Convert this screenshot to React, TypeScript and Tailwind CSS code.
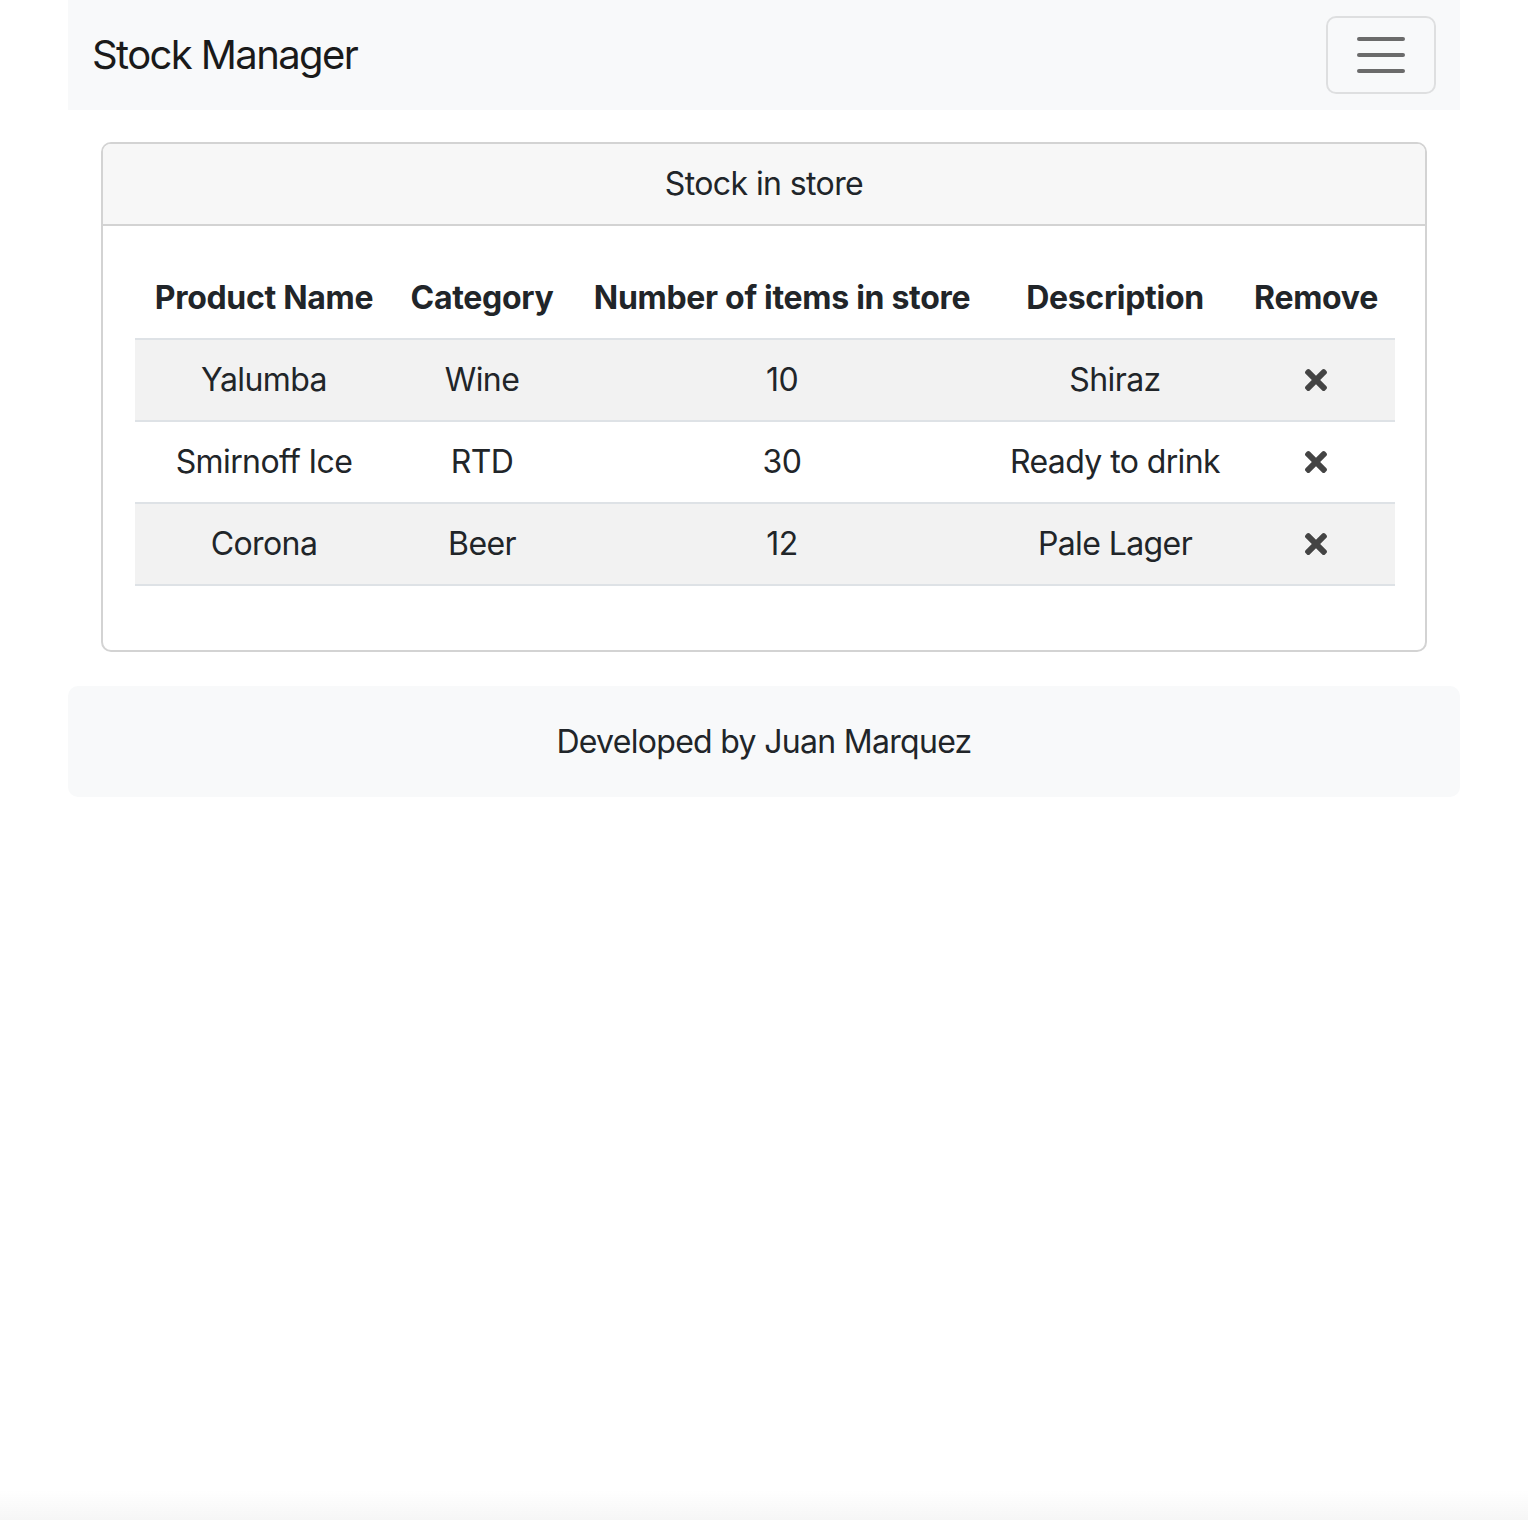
import { FaTimes } from 'react-icons/fa';

const products = [
  { name: 'Yalumba', category: 'Wine', count: 10, description: 'Shiraz' },
  { name: 'Smirnoff Ice', category: 'RTD', count: 30, description: 'Ready to drink' },
  { name: 'Corona', category: 'Beer', count: 12, description: 'Pale Lager' },
];

export default function App() {
  return (
    <div
      className="relative min-h-screen bg-white text-[#212529]"
      style={{ fontFamily: 'Inter, "Noto Sans", sans-serif' }}
    >
      <div className="mx-[68px]">
        <nav className="h-[110px] bg-[#f8f9fa] flex items-center justify-between pl-6 pr-6">
          <span className="text-[40px] leading-none text-[#1a1a1a] tracking-[-1.6px]">Stock Manager</span>
          <button
            type="button"
            className="w-[110px] h-[78px] border-2 border-black/10 rounded-[10px] flex flex-col items-center justify-center gap-[12px]"
          >
            <span className="block w-[48px] h-[4px] rounded-full bg-[#6b6b6b]" />
            <span className="block w-[48px] h-[4px] rounded-full bg-[#6b6b6b]" />
            <span className="block w-[48px] h-[4px] rounded-full bg-[#6b6b6b]" />
          </button>
        </nav>

        <main className="px-[33px] pt-[32px]">
          <div className="border-2 border-[#d3d3d3] rounded-[10px] overflow-hidden">
            <div className="h-[82px] bg-[#f7f7f7] border-b-2 border-[#d3d3d3] flex items-center justify-center text-[32px] tracking-[-0.6px]">
              Stock in store
            </div>
            <div className="p-[32px]">
              <table className="w-full table-fixed border-collapse text-center text-[32px] mb-[32px]">
                <colgroup>
                  <col className="w-[258px]" />
                  <col className="w-[178px]" />
                  <col className="w-[422px]" />
                  <col className="w-[244px]" />
                  <col className="w-[158px]" />
                </colgroup>
                <thead>
                  <tr className="border-b-2 border-[#dee2e6]">
                    <th className="py-4 font-bold leading-[48px] tracking-[-0.3px]">Product Name</th>
                    <th className="py-4 font-bold leading-[48px] tracking-[-0.3px]">Category</th>
                    <th className="py-4 font-bold leading-[48px] tracking-[-0.3px]">Number of items in store</th>
                    <th className="py-4 font-bold leading-[48px] tracking-[-0.3px]">Description</th>
                    <th className="py-4 font-bold leading-[48px] tracking-[-0.3px]">Remove</th>
                  </tr>
                </thead>
                <tbody className="tracking-[-0.6px]">
                  {products.map((p, i) => (
                    <tr
                      key={p.name}
                      className={`border-b-2 border-[#dee2e6] ${i % 2 === 0 ? 'bg-[#f2f2f2]' : 'bg-white'}`}
                    >
                      <td className="py-4 leading-[48px]">{p.name}</td>
                      <td className="py-4 leading-[48px]">{p.category}</td>
                      <td className="py-4 leading-[48px]">{p.count}</td>
                      <td className="py-4 leading-[48px]">{p.description}</td>
                      <td className="py-4 leading-[48px]">
                        <FaTimes size={32} className="inline-block align-middle text-[#444] mt-[-4px]" />
                      </td>
                    </tr>
                  ))}
                </tbody>
              </table>
            </div>
          </div>
        </main>

        <footer className="mt-[34px] h-[111px] bg-[#f8f9fa] rounded-[10px] flex items-center justify-center text-[32px] tracking-[-0.7px]">
          Developed by Juan Marquez
        </footer>
      </div>

      <div className="pointer-events-none fixed inset-x-0 bottom-0 h-[30px] bg-gradient-to-b from-transparent to-[#f6f6f6]" />
    </div>
  );
}
